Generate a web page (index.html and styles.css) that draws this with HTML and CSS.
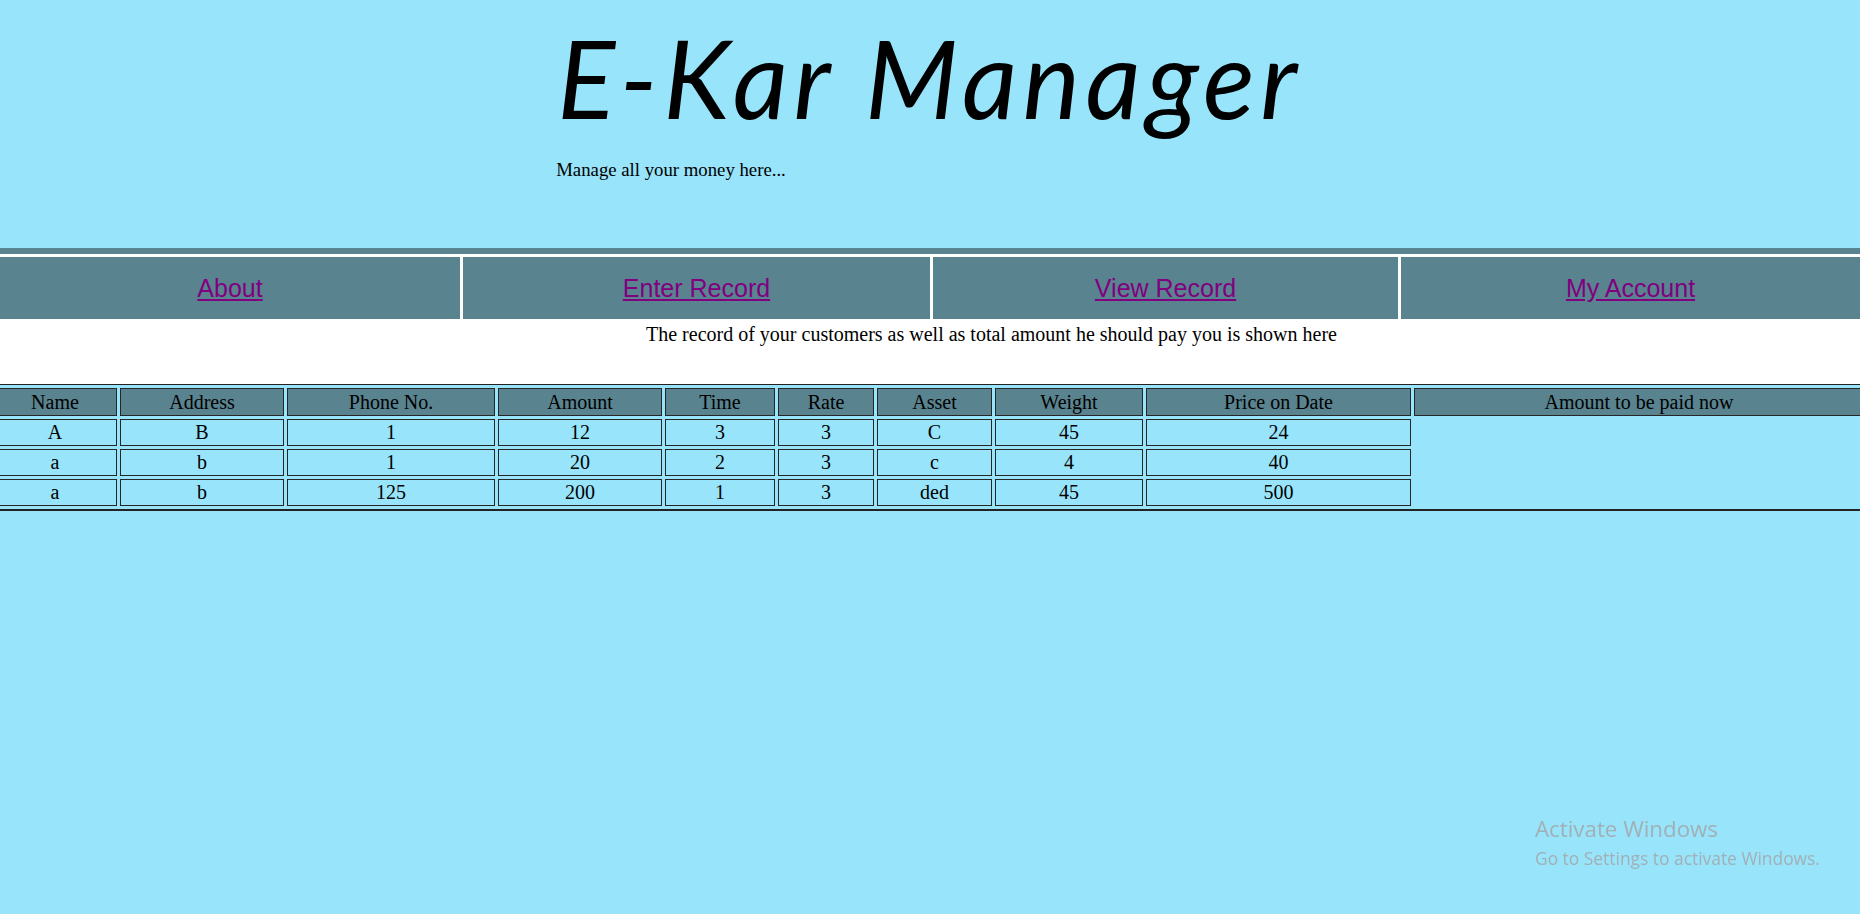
FILE: index.html
```html
<!DOCTYPE html>
<html lang="en">
<head>
<meta charset="utf-8">
<title>E-Kar Manager</title>
<link rel="stylesheet" href="styles.css">
</head>
<body>
<header class="masthead">
  <div class="brand">
    <h1 class="title">E-Kar Manager</h1>
    <p class="tagline">Manage all your money here...</p>
  </div>
</header>
<div class="rule"></div>
<nav class="nav">
  <div class="nav-item nav-about"><a href="#">About</a></div>
  <div class="nav-item nav-enter"><a href="#">Enter Record</a></div>
  <div class="nav-item nav-view"><a href="#">View Record</a></div>
  <div class="nav-item nav-account"><a href="#">My Account</a></div>
</nav>
<section class="intro">
  <p>The record of your customers as well as total amount he should pay you is shown here</p>
</section>
<div class="table-wrap">
  <table class="records">
    <thead>
      <tr>
        <th class="c-name">Name</th>
        <th class="c-address">Address</th>
        <th class="c-phone">Phone No.</th>
        <th class="c-amount">Amount</th>
        <th class="c-time">Time</th>
        <th class="c-rate">Rate</th>
        <th class="c-asset">Asset</th>
        <th class="c-weight">Weight</th>
        <th class="c-price">Price on Date</th>
        <th class="c-due">Amount to be paid now</th>
      </tr>
    </thead>
    <tbody>
      <tr><td>A</td><td>B</td><td>1</td><td>12</td><td>3</td><td>3</td><td>C</td><td>45</td><td>24</td></tr>
      <tr><td>a</td><td>b</td><td>1</td><td>20</td><td>2</td><td>3</td><td>c</td><td>4</td><td>40</td></tr>
      <tr><td>a</td><td>b</td><td>125</td><td>200</td><td>1</td><td>3</td><td>ded</td><td>45</td><td>500</td></tr>
    </tbody>
  </table>
</div>
<div class="watermark">
  <div class="wm-title">Activate Windows</div>
  <div class="wm-sub">Go to Settings to activate Windows.</div>
</div>
</body>
</html>
```
FILE: styles.css
```css
html, body {
  margin: 0;
  padding: 0;
}
body {
  background: #98e4fb;
  font-family: "Liberation Serif", "Times New Roman", serif;
  color: #000;
  overflow: hidden;
  height: 914px;
}
.masthead {
  height: 248px;
  display: flex;
  justify-content: center;
}
.brand {
  display: flex;
  flex-direction: column;
  align-items: flex-start;
}
.title {
  margin: 23px 0 0 0;
  font-family: Lato, "Open Sans", sans-serif;
  font-style: italic;
  font-weight: 400;
  font-size: 108px;
  line-height: 108px;
  letter-spacing: 5.6px;
}
.tagline {
  margin: 28px 0 0 -1px;
  font-size: 18.75px;
  line-height: 22px;
}
.rule {
  height: 6px;
  background: #59838f;
  border-bottom: 3px solid #fff;
}
.nav {
  display: flex;
  gap: 3px;
  background: #fff;
}
.nav-item {
  height: 62px;
  background: #59838f;
  display: flex;
  align-items: center;
  justify-content: center;
}
.nav-about { flex: 460 1 0; }
.nav-enter { flex: 467 1 0; }
.nav-view { flex: 465 1 0; }
.nav-account { flex: 459 1 0; }
.nav-item a {
  font-family: "Liberation Sans", Arial, sans-serif;
  font-size: 25px;
  color: #800080;
  text-decoration: underline;
}
.intro {
  background: #fff;
  height: 65px;
  padding: 4px 0 0 123px;
  box-sizing: border-box;
  text-align: center;
}
.intro p {
  margin: 0;
  font-size: 20px;
  line-height: 23px;
}
.table-wrap {
  overflow: hidden;
  width: 100%;
}
.records {
  margin-left: -11px;
  width: 1879px;
  table-layout: fixed;
  border-collapse: separate;
  border-spacing: 3px;
  border: 1px solid #222;
  border-bottom-width: 2px;
  background: #98e4fb;
  font-size: 20px;
}
.records th,
.records td {
  border: 1px solid #262626;
  padding: 1px;
  text-align: center;
  font-weight: 400;
  line-height: 23px;
}
.records th {
  background: #59838f;
  line-height: 24px;
}
.records td {
  background: #98e4fb;
}
.c-name { width: 120px; }
.c-address { width: 160px; }
.c-phone { width: 204px; }
.c-amount { width: 160px; }
.c-time { width: 106px; }
.c-rate { width: 92px; }
.c-asset { width: 111px; }
.c-weight { width: 144px; }
.c-price { width: 261px; }
.c-due { width: 446px; }
.watermark {
  position: fixed;
  left: 1535px;
  top: 814px;
  font-family: "Open Sans", "Noto Sans", sans-serif;
  color: #a0b0b6;
}
.wm-title {
  font-size: 22.3px;
  line-height: 30px;
}
.wm-sub {
  font-size: 17.4px;
  line-height: 28px;
}
```
